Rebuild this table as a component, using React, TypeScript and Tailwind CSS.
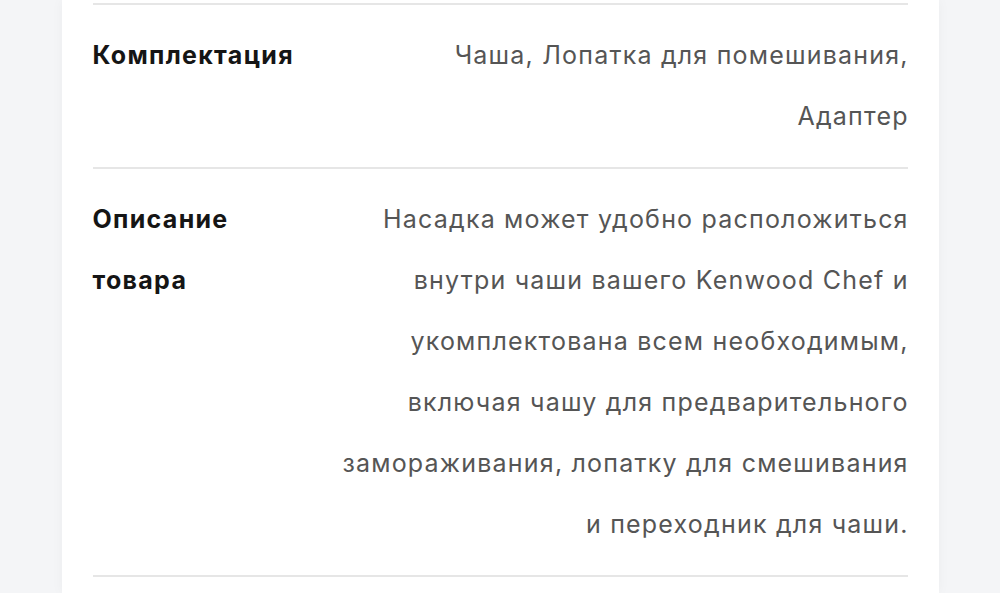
const rows = [
  {
    label: ['Комплектация'],
    value: ['Чаша, Лопатка для помешивания,', 'Адаптер'],
  },
  {
    label: ['Описание', 'товара'],
    value: [
      'Насадка может удобно расположиться',
      'внутри чаши вашего Kenwood Chef и',
      'укомплектована всем необходимым,',
      'включая чашу для предварительного',
      'замораживания, лопатку для смешивания',
      'и переходник для чаши.',
    ],
  },
]

export default function App() {
  return (
    <div className="flex h-[593px] w-[1000px] justify-center overflow-hidden bg-[#f4f5f7] font-['Inter','Noto_Sans',sans-serif]">
      <div className="w-[877px] bg-white px-[31px] shadow-[0_0_12px_rgba(0,0,0,0.04)]">
        <div className="mt-[3px] h-[2px] bg-[#e6e6e6]" />
        {rows.map((row) => (
          <div key={row.label[0]}>
            <div className="flex justify-between py-[20px] text-[25px] leading-[61px]">
              <div className="font-bold tracking-[1.3px] text-[#151515]">
                {row.label.map((l) => (
                  <div key={l}>{l}</div>
                ))}
              </div>
              <div className="text-right tracking-[1.2px] text-[#555555] [&>div]:-mr-[1.2px]">
                {row.value.map((v) => (
                  <div key={v}>{v}</div>
                ))}
              </div>
            </div>
            <div className="h-[2px] bg-[#e6e6e6]" />
          </div>
        ))}
      </div>
    </div>
  )
}
